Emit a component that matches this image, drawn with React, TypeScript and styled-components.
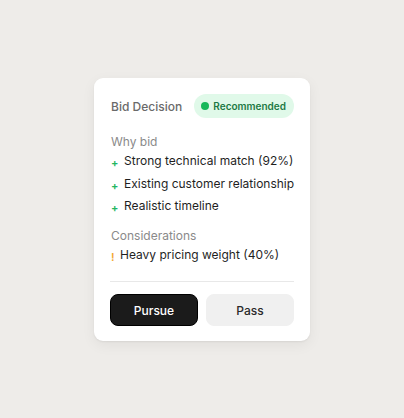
import React from "react";
import styled, { createGlobalStyle } from "styled-components";

const GlobalStyle = createGlobalStyle`
  html, body {
    margin: 0;
    padding: 0;
    background: #eeece9;
  }
  body {
    font-family: Inter, "Noto Sans", sans-serif;
    -webkit-font-smoothing: antialiased;
  }
`;

const Page = styled.div`
  width: 404px;
  height: 418px;
  padding-top: 78px;
  padding-left: 94px;
  box-sizing: border-box;
  background: #eeece9;
`;

const Card = styled.div`
  width: 216px;
  box-sizing: border-box;
  padding: 16px 16px 15px;
  background: #ffffff;
  border-radius: 9px;
  box-shadow: 0 1px 2px rgba(0, 0, 0, 0.06), 0 4px 14px rgba(0, 0, 0, 0.06);
`;

const Header = styled.div`
  display: flex;
  align-items: center;
  justify-content: space-between;
  height: 24px;
`;

const Title = styled.div`
  font-size: 12px;
  font-weight: 500;
  color: #6a6a6a;
  padding-left: 1px;
`;

const Badge = styled.div`
  display: flex;
  align-items: center;
  gap: 4px;
  height: 24px;
  padding: 0 8px 0 7px;
  border-radius: 12px;
  background: #e0f9e9;
  color: #1d7a44;
  font-size: 10px;
  font-weight: 600;
`;

const Dot = styled.span`
  width: 8px;
  height: 8px;
  border-radius: 50%;
  background: #17b85a;
`;

const Section = styled.div<{ $top: number }>`
  margin-top: ${(p) => p.$top}px;
  display: flex;
  flex-direction: column;
`;

const Label = styled.div`
  font-size: 12px;
  line-height: 18px;
  color: #8a8a8a;
  padding-left: 1px;
  margin-bottom: 1px;
`;

const List = styled.div`
  display: flex;
  flex-direction: column;
  gap: 4.5px;
`;

const Item = styled.div`
  display: flex;
  align-items: center;
  gap: 6px;
  font-size: 12px;
  line-height: 18px;
  color: #1f1f1f;
  white-space: nowrap;
`;

const Marker = styled.span<{ $color: string }>`
  width: ${(p) => (p.$color === "warn" ? "3px" : "7px")};
  padding-left: 1px;
  font-size: 11px;
  font-weight: 600;
  line-height: 1;
  margin-top: 5px;
  color: ${(p) => (p.$color === "warn" ? "#f3a833" : "#22b561")};
`;

const Divider = styled.div`
  height: 1px;
  background: #e8e8e8;
  margin-top: 17px;
`;

const Actions = styled.div`
  display: grid;
  grid-template-columns: 1fr 1fr;
  gap: 8px;
  margin-top: 12px;
`;

const Button = styled.button<{ $primary?: boolean }>`
  height: 32px;
  border-radius: 8px;
  font-family: Inter, "Noto Sans", sans-serif;
  font-size: 12px;
  font-weight: 500;
  cursor: pointer;
  border: 1px solid ${(p) => (p.$primary ? "#000" : "#f0f0f0")};
  background: ${(p) => (p.$primary ? "#1b1b1b" : "#f0f0f0")};
  color: ${(p) => (p.$primary ? "#ffffff" : "#2a2a2a")};
`;

const reasons = [
  "Strong technical match (92%)",
  "Existing customer relationship",
  "Realistic timeline",
];

const considerations = ["Heavy pricing weight (40%)"];

export default function App() {
  return (
    <>
      <GlobalStyle />
      <Page>
        <Card>
          <Header>
            <Title>Bid Decision</Title>
            <Badge>
              <Dot />
              Recommended
            </Badge>
          </Header>

          <Section $top={15}>
            <Label>Why bid</Label>
            <List>
              {reasons.map((r) => (
                <Item key={r}>
                  <Marker $color="ok">+</Marker>
                  {r}
                </Item>
              ))}
            </List>
          </Section>

          <Section $top={12}>
            <Label>Considerations</Label>
            <List>
              {considerations.map((c) => (
                <Item key={c}>
                  <Marker $color="warn">!</Marker>
                  {c}
                </Item>
              ))}
            </List>
          </Section>

          <Divider />

          <Actions>
            <Button $primary>Pursue</Button>
            <Button>Pass</Button>
          </Actions>
        </Card>
      </Page>
    </>
  );
}
